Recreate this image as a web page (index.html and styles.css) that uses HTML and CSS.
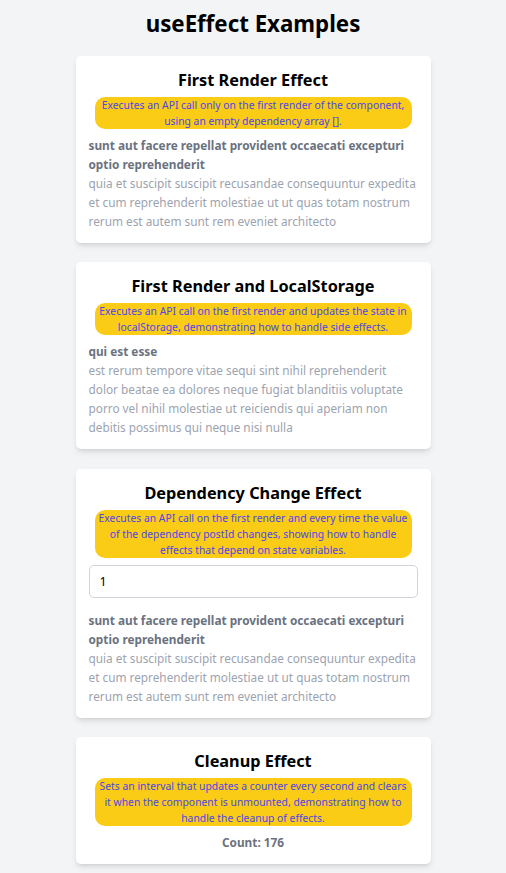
FILE: index.html
```html
<!DOCTYPE html>
<html lang="en">
<head>
<meta charset="utf-8">
<title>useEffect Examples</title>
<link rel="stylesheet" href="styles.css">
</head>
<body>
<main class="page">
  <h1 class="page-title">useEffect Examples</h1>

  <section class="card">
    <h2 class="card-title">First Render Effect</h2>
    <p class="desc">Executes an API call only on the first render of the component, using an empty dependency array [].</p>
    <div class="post">
      <h3 class="post-title">sunt aut facere repellat provident occaecati excepturi optio reprehenderit</h3>
      <p class="post-body">quia et suscipit suscipit recusandae consequuntur expedita et cum reprehenderit molestiae ut ut quas totam nostrum rerum est autem sunt rem eveniet architecto</p>
    </div>
  </section>

  <section class="card">
    <h2 class="card-title">First Render and LocalStorage</h2>
    <p class="desc">Executes an API call on the first render and updates the state in localStorage, demonstrating how to handle side effects.</p>
    <div class="post">
      <h3 class="post-title">qui est esse</h3>
      <p class="post-body">est rerum tempore vitae sequi sint nihil reprehenderit dolor beatae ea dolores neque fugiat blanditiis voluptate porro vel nihil molestiae ut reiciendis qui aperiam non debitis possimus qui neque nisi nulla</p>
    </div>
  </section>

  <section class="card">
    <h2 class="card-title">Dependency Change Effect</h2>
    <p class="desc">Executes an API call on the first render and every time the value of the dependency postId changes, showing how to handle effects that depend on state variables.</p>
    <input class="field" type="number" value="1">
    <div class="post">
      <h3 class="post-title">sunt aut facere repellat provident occaecati excepturi optio reprehenderit</h3>
      <p class="post-body">quia et suscipit suscipit recusandae consequuntur expedita et cum reprehenderit molestiae ut ut quas totam nostrum rerum est autem sunt rem eveniet architecto</p>
    </div>
  </section>

  <section class="card">
    <h2 class="card-title">Cleanup Effect</h2>
    <p class="desc">Sets an interval that updates a counter every second and clears it when the component is unmounted, demonstrating how to handle the cleanup of effects.</p>
    <p class="count">Count: 176</p>
  </section>
</main>
</body>
</html>
```

FILE: styles.css
```css
* { box-sizing: border-box; }

html, body {
  margin: 0;
  padding: 0;
  background: #f3f4f6;
}

body {
  font-family: "Noto Sans", "Open Sans", sans-serif;
  color: #000;
}

.page {
  width: 355px;
  margin: 0 auto;
  padding: 8px 0 11px;
  display: flex;
  flex-direction: column;
  gap: 19.3px;
}

.page-title {
  margin: 0 0 -3.3px;
  font-size: 22.3px;
  line-height: 32px;
  font-weight: 700;
  text-align: center;
}

.card {
  background: #fff;
  border-radius: 5px;
  box-shadow: 0 4px 6px -1px rgba(0,0,0,0.1), 0 2px 4px -2px rgba(0,0,0,0.1);
  padding: 12px 13px 12px;
  display: flex;
  flex-direction: column;
}

.card-title {
  margin: 0 0 5px;
  font-size: 16.3px;
  line-height: 24px;
  font-weight: 700;
  text-align: center;
}

.desc {
  margin: 0 6px 7px;
  padding: 0 2px;
  background: #facc15;
  color: #4f46e5;
  border-radius: 10px;
  font-size: 10.35px;
  line-height: 16px;
  text-align: center;
}

.field {
  display: block;
  width: 100%;
  height: 33px;
  margin: 0 0 13.5px;
  padding: 0 10px;
  border: 1px solid #d1d5db;
  border-radius: 5px;
  font-family: inherit;
  font-size: 12.5px;
  color: #000;
  background: #fff;
  -moz-appearance: textfield;
}

.field::-webkit-inner-spin-button,
.field::-webkit-outer-spin-button {
  -webkit-appearance: none;
  margin: 0;
}

.post-title {
  margin: 0;
  font-size: 11.8px;
  line-height: 19px;
  font-weight: 700;
  color: #6b7280;
}

.post-body {
  margin: 0;
  font-size: 11.8px;
  line-height: 19px;
  color: #9ca3af;
}

.count {
  margin: 0;
  font-size: 11.8px;
  line-height: 19px;
  font-weight: 700;
  color: #6b7280;
  text-align: center;
}
```
